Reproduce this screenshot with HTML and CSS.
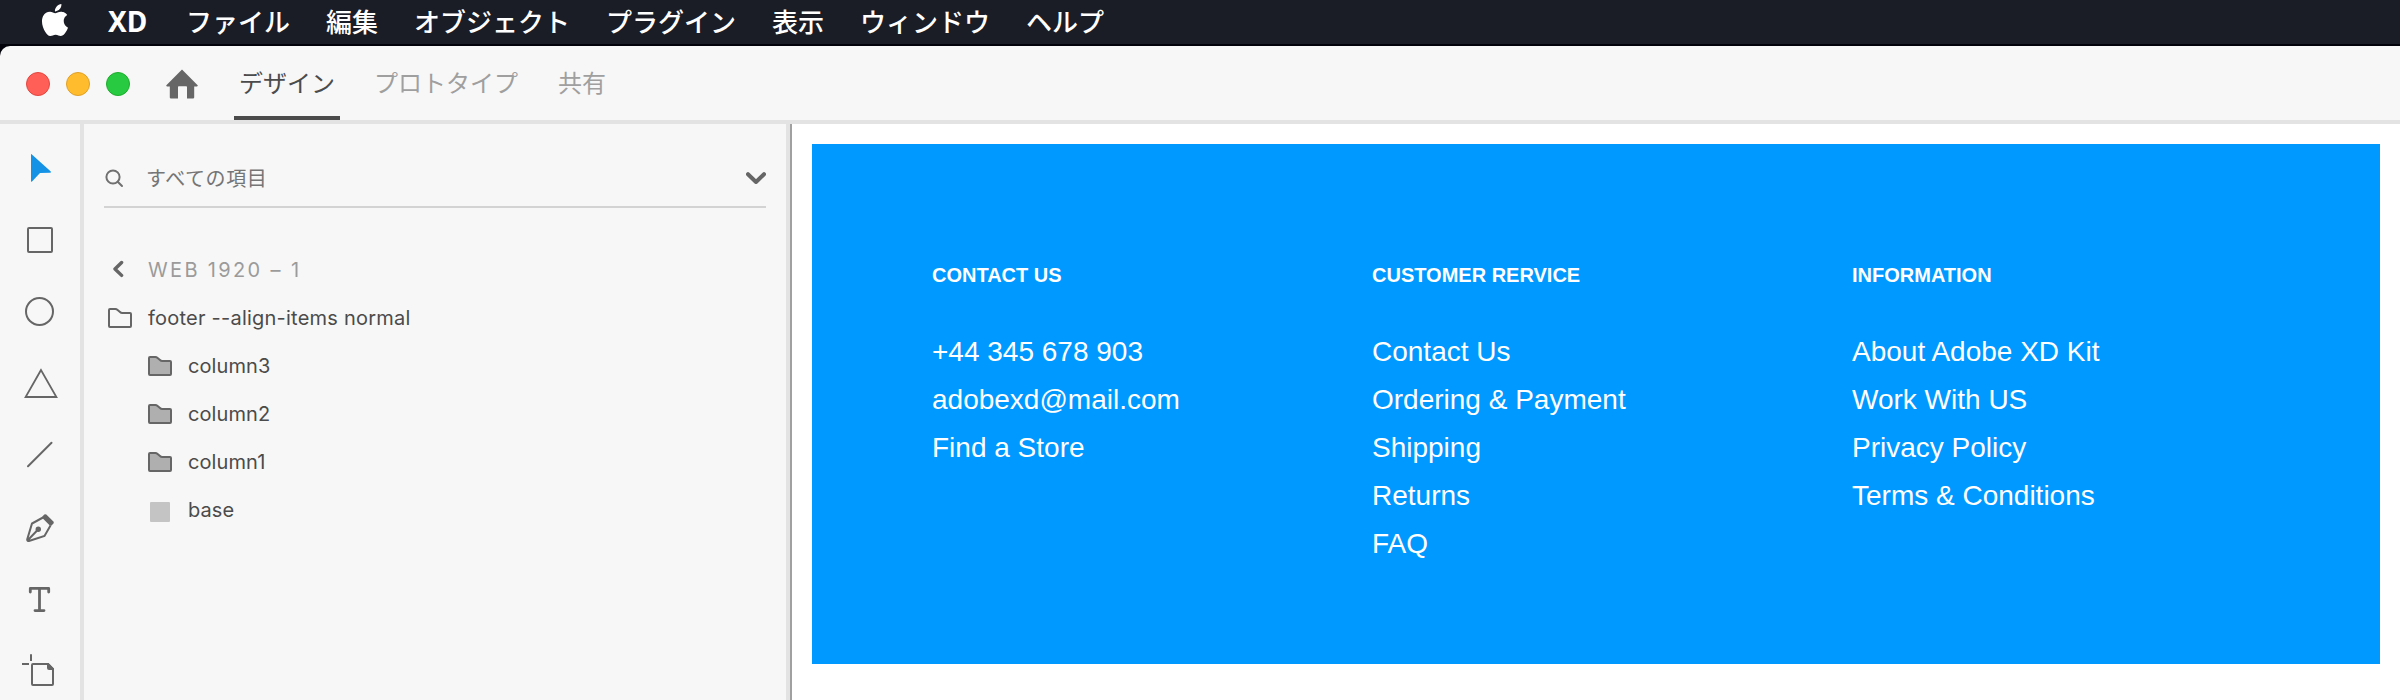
FILE: index.html
```
<!DOCTYPE html>
<html lang="ja">
<head>
<meta charset="utf-8">
<title>XD</title>
<link rel="stylesheet" href="styles.css">
</head>
<body>
<svg class="defs" width="0" height="0">
  <symbol id="folder" viewBox="0 0 24 20"><path d="M1 2Q1 1 2 1H7.5Q8.5 1 9.3 1.7L12 4Q13 5 14.2 5H22Q23 5 23 6V18Q23 19 22 19H2Q1 19 1 18Z" stroke="#666" stroke-width="2"/></symbol>
</svg>
<nav class="menubar">
  <svg class="apple" viewBox="0 0 24 24"><path fill="#fff" d="M12.152 6.896c-.948 0-2.415-1.078-3.96-1.04-2.04.027-3.91 1.183-4.961 3.014-2.117 3.675-.546 9.103 1.519 12.09 1.013 1.454 2.208 3.09 3.792 3.039 1.52-.065 2.09-.987 3.935-.987 1.831 0 2.35.987 3.96.948 1.637-.026 2.676-1.48 3.676-2.948 1.156-1.688 1.636-3.325 1.662-3.415-.039-.013-3.182-1.221-3.22-4.857-.026-3.04 2.48-4.494 2.597-4.559-1.429-2.09-3.623-2.324-4.39-2.376-2-.156-3.675 1.09-4.61 1.09zM15.53 3.83c.843-1.012 1.4-2.427 1.245-3.83-1.207.052-2.662.805-3.532 1.818-.78.896-1.454 2.338-1.273 3.714 1.338.104 2.715-.688 3.559-1.701"/></svg>
  <span class="app-name">XD</span>
  <span>ファイル</span>
  <span>編集</span>
  <span>オブジェクト</span>
  <span>プラグイン</span>
  <span>表示</span>
  <span>ウィンドウ</span>
  <span>ヘルプ</span>
</nav>
<div class="window">
  <header class="titlebar">
    <div class="lights"><i class="light close"></i><i class="light minimise"></i><i class="light zoom"></i></div>
    <svg class="home" viewBox="0 0 32 30"><path fill="#666" d="M16 .5 31.4 16Q32.4 17.2 31 17.4H28.2V28.6Q28.2 29.4 27.4 29.4H21V18Q21 17.2 20.2 17.2H12.8Q12 17.2 12 18V29.4H4.6Q3.8 29.4 3.8 28.6V17.4H1Q-.4 17.2 .6 16Z"/></svg>
    <div class="tabs">
      <span class="tab active">デザイン</span>
      <span class="tab">プロトタイプ</span>
      <span class="tab">共有</span>
    </div>
  </header>
  <div class="workspace">
    <aside class="tools">
      <svg class="tool" viewBox="0 0 80 72"><path fill="#1492e6" d="M31 22.4Q31 21.6 31.6 22.2L50.8 39.4Q51.4 40.6 50 40.7L40 41 32 49.4Q31 50.2 31 49Z"/></svg>
      <svg class="tool" viewBox="0 0 80 72"><rect x="28" y="24" width="24" height="24" rx="1"/></svg>
      <svg class="tool" viewBox="0 0 80 72"><circle cx="39.5" cy="35.5" r="13.5"/></svg>
      <svg class="tool" viewBox="0 0 80 72"><path d="M41 22 25.6 49H56.4Z" stroke-width="1.8"/></svg>
      <svg class="tool" viewBox="0 0 80 72"><path d="M28 46.3 51.5 22.8" stroke-linecap="round"/></svg>
      <svg class="tool" viewBox="0 0 80 72"><path d="M43 25.5 32 31.5 27.2 47.5Q27.2 49.2 29 49L44.5 44 50.5 33.5M28 48 38.3 37.3"/><circle class="solid" cx="38.3" cy="37.3" r="2.7"/><path class="solid" d="M44.3 22.6Q45.3 21.7 46.3 22.6L53.4 29.5Q54.2 30.5 53.4 31.5L51.6 33.4Q50.7 34.2 49.8 33.4L42.3 26Q41.6 25.2 42.4 24.4Z"/></svg>
      <svg class="tool" viewBox="0 0 80 72"><path d="M30.3 28V24.4H48.7V28M39.5 24.4V46.6M35 46.6H44" stroke-width="2.8" stroke-linecap="round" stroke-linejoin="round"/></svg>
      <svg class="tool" viewBox="0 0 80 72"><path d="M48 28H33Q32 28 32 29V48Q32 49 33 49H52Q53 49 53 48V33Z" /><path class="solid" d="M47 27V32Q47 34 49 34H54V32.8L48.5 27Z"/><path d="M22 28H29M31 18.3V25"/></svg>
    </aside>
    <section class="layers">
      <div class="search">
        <svg class="search-icon" viewBox="0 0 20 20"><circle cx="9" cy="9" r="6.6"/><path d="M13.7 13.7 18 18" stroke-linecap="round"/></svg>
        <span class="search-text">すべての項目</span>
        <svg class="chevron" viewBox="0 0 20 12"><path d="M2 2.2 10 10 18 2.2"/></svg>
      </div>
      <div class="tree">
        <div class="row crumb"><svg class="back" viewBox="0 0 12 18"><path d="M9.6 2.5 3 9 9.6 15.4"/></svg><span>WEB 1920 – 1</span></div>
        <div class="row root"><svg class="folder"><use href="#folder"/></svg><span>footer --align-items normal</span></div>
        <div class="row child"><svg class="folder filled"><use href="#folder"/></svg><span>column3</span></div>
        <div class="row child"><svg class="folder filled"><use href="#folder"/></svg><span>column2</span></div>
        <div class="row child"><svg class="folder filled"><use href="#folder"/></svg><span>column1</span></div>
        <div class="row child"><i class="swatch"></i><span>base</span></div>
      </div>
    </section>
    <main class="canvas">
      <footer class="artboard">
        <div class="column contact"><h2>CONTACT US</h2><p>+44 345 678 903</p><p>adobexd@mail.com</p><p>Find a Store</p></div>
        <div class="column service"><h2>CUSTOMER RERVICE</h2><p>Contact Us</p><p>Ordering &amp; Payment</p><p>Shipping</p><p>Returns</p><p>FAQ</p></div>
        <div class="column info"><h2>INFORMATION</h2><p>About Adobe XD Kit</p><p>Work With US</p><p>Privacy Policy</p><p>Terms &amp; Conditions</p></div>
      </footer>
    </main>
  </div>
</div>
</body>
</html>
```
FILE: styles.css
```
* { box-sizing: border-box; }
body {
  margin: 0;
  height: 700px;
  overflow: hidden;
  background: #01020a;
  font-family: Inter, "Noto Sans CJK JP", sans-serif;
  display: flex;
  flex-direction: column;
}
.defs { display: none; }
svg { display: block; flex: none; }

.menubar {
  height: 44px;
  flex: none;
  margin-bottom: 2px;
  padding-left: 39px;
  background: #1a1c26;
  color: #fff;
  display: flex;
  align-items: center;
  gap: 36px;
  font: 500 26px/42px "Noto Sans CJK JP", sans-serif;
  white-space: nowrap;
}
.menubar span { height: 44px; }
.apple { width: 32px; height: 32px; margin: -5px 1px 0 0; }
.app-name { width: 42px; font: 700 28px/43px "Noto Sans", sans-serif; }

.window {
  flex: 1;
  min-height: 0;
  background: #f7f7f7;
  border-top-left-radius: 10px;
  overflow: hidden;
  display: flex;
  flex-direction: column;
}
.titlebar {
  height: 78px;
  flex: none;
  border-bottom: 4px solid #e3e3e3;
  padding-left: 26px;
  display: flex;
}
.lights { display: flex; gap: 16px; padding-top: 26px; }
.light { width: 24px; height: 24px; border-radius: 50%; border: 1px solid; }
.close { background: #ff5f57; border-color: #e2463f; }
.minimise { background: #ffbd2e; border-color: #e0a028; }
.zoom { background: #28ca41; border-color: #1dad2b; }
.home { width: 32px; height: 30px; margin: 23px 36px 0 36px; }
.tabs { display: flex; }
.tab {
  height: 74px;
  margin-right: 40px;
  color: #9f9f9f;
  font: 400 24px/71px "Noto Sans CJK JP", sans-serif;
  white-space: nowrap;
}
.tab.active { width: 106px; margin-right: 34px; padding: 0 5px; color: #4b4b4b; border-bottom: 4px solid #4b4b4b; }

.workspace { flex: 1; min-height: 0; display: flex; }
.tools {
  width: 84px;
  flex: none;
  border-right: 4px solid #e3e3e3;
  padding-top: 8px;
  overflow: hidden;
}
.tool { width: 80px; height: 72px; fill: none; stroke: #666; stroke-width: 2; }
.tool:first-child { stroke: none; }
.tool .solid { fill: #666; stroke: none; }

.layers { width: 706px; flex: none; padding: 26px 20px 0; border-right: 4px solid #e3e3e3; }
.search {
  height: 58px;
  border-bottom: 2px solid #d3d3d3;
  display: flex;
  align-items: center;
}
.search-icon { width: 20px; height: 20px; fill: none; stroke: #707070; stroke-width: 2; }
.search-text { margin-left: 22px; font: 400 20px/56px "Noto Sans CJK JP", sans-serif; letter-spacing: .6px; color: #757575; }
.chevron { width: 20px; height: 12px; margin-left: auto; fill: none; stroke: #666; stroke-width: 4; stroke-linecap: round; stroke-linejoin: round; }
.tree { margin-top: 38px; }
.row {
  height: 48px;
  display: flex;
  align-items: center;
  color: #4b4b4b;
  font-size: 20px;
  line-height: 48px;
  white-space: nowrap;
}
.crumb { padding-left: 8px; color: #9b9b9b; letter-spacing: 2.35px; }
.crumb span { margin-left: 24px; }
.back { width: 12px; height: 18px; margin-top: -3px; fill: none; stroke: #666; stroke-width: 3.4; stroke-linecap: round; stroke-linejoin: round; }
.root { padding-left: 4px; letter-spacing: .23px; }
.child { padding-left: 44px; letter-spacing: .1px; }
.root span, .child span { margin-left: 16px; }
.folder { width: 24px; height: 20px; fill: none; }
.filled { fill: #afafaf; }
.swatch { width: 20px; height: 20px; margin: 4px 2px 0; border-radius: 1px; background: #c4c4c4; }

.canvas { flex: 1; background: #fff; border-left: 2px solid #a0a0a0; padding: 20px 20px 0; }
.artboard {
  height: 520px;
  padding: 119px 0 0 120px;
  background: #0099ff;
  color: #fff;
  display: grid;
  grid-template-columns: 440px 480px 1fr;
  font-family: "Liberation Sans", Arial, sans-serif;
}
.column h2 { margin: 0 0 41px; font-size: 20px; line-height: 24px; font-weight: 700; }
.column p { margin: 0; font-size: 28px; line-height: 48px; white-space: nowrap; }
```
